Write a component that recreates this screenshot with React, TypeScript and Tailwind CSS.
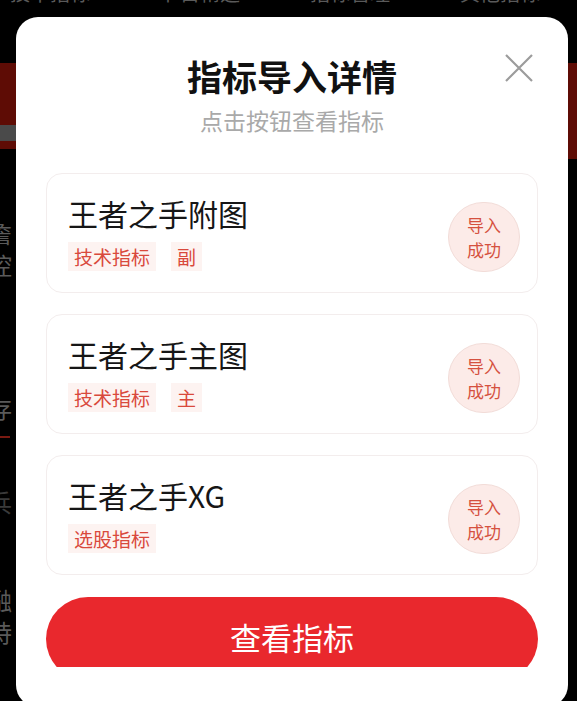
import React from 'react';

type Indicator = {
  name: string;
  tags: string[];
};

const indicators: Indicator[] = [
  { name: '王者之手附图', tags: ['技术指标', '副'] },
  { name: '王者之手主图', tags: ['技术指标', '主'] },
  { name: '王者之手XG', tags: ['选股指标'] },
];

const ImportDetailModal: React.FC = () => {
  return (
    <div className="absolute left-[16px] top-[17px] w-[552px] h-[690px] rounded-[22px] bg-white flex flex-col px-[30px] pt-[37px]">
      {/* Close */}
      <button className="absolute right-[34px] top-[36px] w-[30px] h-[30px]">
        <svg viewBox="0 0 30 30" className="w-[30px] h-[30px]">
          <path d="M2 2 L28 28 M28 2 L2 28" stroke="#9c9c9c" strokeWidth="2.2" fill="none" />
        </svg>
      </button>

      {/* Header */}
      <div className="flex flex-col items-center">
        <h2 className="text-[35px] leading-[44px] font-bold text-[#111111]">指标导入详情</h2>
        <p className="text-[23px] leading-[30px] text-[#a9a9a9] mt-[7px]">点击按钮查看指标</p>
      </div>

      {/* Cards */}
      <div className="flex flex-col gap-[21px] mt-[38px]">
        {indicators.map((item, index) => (
          <div
            key={index}
            className="h-[120px] rounded-[16px] border border-[#f3eded] bg-white flex items-center justify-between pl-[21px] pr-[17px]"
          >
            <div className="flex flex-col gap-[11px]">
              <p className="text-[30px] leading-[36px] text-[#161616]">{item.name}</p>
              <div className="flex items-center gap-[15px]">
                {item.tags.map((tag, i) => (
                  <span
                    key={i}
                    className="h-[29px] px-[6px] flex items-center bg-[#fdf3f1] text-[#d9493c] text-[19px] leading-[29px]"
                  >
                    {tag}
                  </span>
                ))}
              </div>
            </div>
            <div className="w-[72px] h-[70px] mt-[8px] rounded-full bg-[#fcebe8] border border-[#f2dcd8] flex flex-col items-center justify-center text-[17px] leading-[25px] text-[#d5513f]">
              <span>导入</span>
              <span>成功</span>
            </div>
          </div>
        ))}
      </div>

      {/* Button, clipped at the bottom */}
      <div className="mt-[22px] h-[70px] overflow-hidden">
        <button className="w-full h-[84px] rounded-full bg-[#e9282d] text-white text-[31px] leading-[80px] flex justify-center">
          查看指标
        </button>
      </div>
    </div>
  );
};

const App: React.FC = () => {
  return (
    <div
      className="relative w-[577px] h-[701px] bg-black overflow-hidden"
      style={{ fontFamily: '"Noto Sans CJK SC", "Noto Sans", sans-serif' }}
    >
      {/* Dimmed page behind the modal */}
      <div className="flex flex-col">
        <div className="flex gap-[70px] -mt-[20px] pl-[10px] text-[20px] leading-[26px] text-[#5a5a5a] whitespace-nowrap">
          <span>技术指标</span>
          <span>节目精选</span>
          <span>指标管理</span>
          <span>其他指标</span>
          <span>我的</span>
        </div>
        <div className="flex justify-between mt-[57px]">
          <div className="w-[16px] h-[86px] bg-[#5e0c05] flex flex-col justify-end">
            <div className="h-[16px] bg-[#4a4a4a] mb-[8px]" />
          </div>
          <div className="w-[9px] h-[96px] bg-[#5e0c05]" />
        </div>
        <div className="flex flex-col -ml-[12px] mt-[58px] text-[24px] leading-[32px] text-[#5a5a5a]">
          <span>詹</span>
          <span>控</span>
          <span className="text-[20px]">2</span>
          <span className="text-[20px]">1</span>
          <span className="mt-[47px]">存</span>
          <div className="ml-[12px] w-[10px] h-[2px] bg-[#7a1a12] mt-[12px]" />
          <span className="mt-[48px] text-[#3a3a3a]">兵</span>
          <span className="mt-[66px]">融</span>
          <span>持</span>
        </div>
      </div>

      <ImportDetailModal />
    </div>
  );
};

export default App;
